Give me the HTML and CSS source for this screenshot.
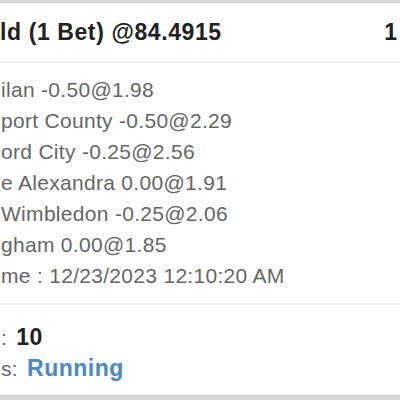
FILE: index.html
```html
<!DOCTYPE html>
<html>
<head>
<meta charset="utf-8">
<link rel="stylesheet" href="styles.css">
</head>
<body>
<div class="page">
  <div class="card">
    <div class="card-head">
      <span class="title">ld (1 Bet) @84.4915</span>
      <span class="count">1</span>
    </div>
    <div class="card-body">
      <div class="line">ilan -0.50@1.98</div>
      <div class="line">port County -0.50@2.29</div>
      <div class="line">ord City -0.25@2.56</div>
      <div class="line">e Alexandra 0.00@1.91</div>
      <div class="line">Wimbledon -0.25@2.06</div>
      <div class="line">gham 0.00@1.85</div>
      <div class="line">me : 12/23/2023 12:10:20 AM</div>
    </div>
    <div class="card-foot">
      <div class="line">: <b class="strong">10</b></div>
      <div class="line">s: <b class="status">Running</b></div>
    </div>
  </div>
</div>
</body>
</html>
```

FILE: styles.css
```css
html, body {
  margin: 0;
  padding: 0;
  background: #d9d9d9;
}
.page {
  width: 400px;
  height: 400px;
  padding-top: 3px;
  box-sizing: border-box;
  overflow: hidden;
  font-family: "Liberation Sans", Arial, sans-serif;
}
.card {
  background: #fff;
  height: 392px;
}
.card-head {
  display: flex;
  justify-content: space-between;
  align-items: center;
  height: 58px;
  padding: 0 3px 0 0;
  border-bottom: 2px solid #efefef;
  font-weight: bold;
  font-size: 23px;
  color: #222;
}
.title {
  letter-spacing: 0.6px;
}
.card-body {
  padding: 11px 0 12px 1px;
  border-bottom: 2px solid #efefef;
}
.line {
  font-size: 21px;
  line-height: 31px;
  color: #666;
  letter-spacing: 0.3px;
  white-space: nowrap;
}
.card-foot {
  padding: 17px 0 0 1px;
}
.strong,
.status {
  font-weight: bold;
  font-size: 23px;
  letter-spacing: 0.5px;
  margin-left: 3px;
}
.strong {
  color: #222;
}
.status {
  color: #4a88c7;
}
```
